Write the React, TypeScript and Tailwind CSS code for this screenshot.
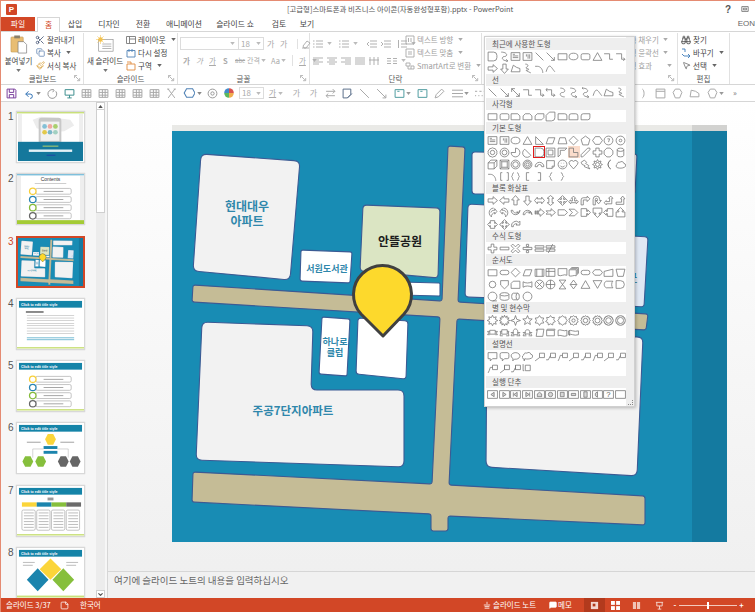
import React from 'react';
import { Scissors, Copy, Paintbrush, Binoculars, MousePointer2, MessageSquare, StickyNote, ChevronDown } from 'lucide-react';

type Pt = [number, number];

// rounded polygon for map blocks
const roundPoly = (pts: Pt[], r = 4) => {
  let d = '';
  pts.forEach((p, i) => {
    const a = pts[(i - 1 + pts.length) % pts.length];
    const b = pts[(i + 1) % pts.length];
    const la = Math.hypot(a[0] - p[0], a[1] - p[1]);
    const lb = Math.hypot(b[0] - p[0], b[1] - p[1]);
    const s: Pt = [p[0] + ((a[0] - p[0]) * r) / la, p[1] + ((a[1] - p[1]) * r) / la];
    const e: Pt = [p[0] + ((b[0] - p[0]) * r) / lb, p[1] + ((b[1] - p[1]) * r) / lb];
    d += `${i === 0 ? 'M' : 'L'}${s[0]} ${s[1]}Q${p[0]} ${p[1]} ${e[0]} ${e[1]}`;
  });
  return d + 'Z';
};

const Block = ({ pts, fill = '#f2f2f2', r = 4 }: { pts: Pt[]; fill?: string; r?: number }) => (
  <path d={roundPoly(pts, r)} fill={fill} stroke="#3b5b94" strokeWidth={1.1} />
);

const FONT = '"Noto Sans CJK KR", "Noto Sans", sans-serif';

const MapArt = ({ className }: { className?: string }) => (
  <svg viewBox="172 132 555 411" preserveAspectRatio="none" className={className} fontFamily={FONT}>
    <rect x="172" y="132" width="555" height="411" fill="#188cb4" />
    <rect x="692" y="132" width="35" height="411" fill="#147aa0" />
    {/* roads */}
    <path
      d={roundPoly([[193, 286], [442, 302], [448, 147], [465, 148], [458, 303], [648, 315], [646, 331], [457, 320], [449, 486], [645, 497], [645, 526], [448, 517], [448, 532], [431, 532], [431, 515], [192, 503], [193, 473], [432, 485], [440, 318], [192, 303]], 2.5)}
      fill="#c5bc96"
      stroke="#3b5b94"
      strokeWidth={1.1}
    />
    {/* blocks */}
    <Block pts={[[201, 155], [300, 162], [290, 281], [193, 272]]} r={6} />
    <Block pts={[[363, 206], [440, 209], [438, 279], [360, 272]]} fill="#dbe5c3" />
    <Block pts={[[301, 251], [352, 253], [350, 284], [300, 282]]} fill="#ffffff" r={2} />
    <Block pts={[[400, 283], [440, 284], [440, 297], [400, 296]]} fill="#ffffff" r={1} />
    <Block pts={[[322, 318], [350, 320], [347, 377], [319, 375]]} fill="#ffffff" r={2} />
    <Block pts={[[358, 319], [408, 322], [406, 380], [356, 375]]} fill="#ffffff" r={3} />
    <Block pts={[[202, 323], [313, 327], [311, 391], [404, 391], [404, 468], [196, 461]]} r={6} />
    <Block pts={[[472, 153], [637, 155], [635, 195], [472, 195]]} r={3} />
    <Block pts={[[468, 205], [560, 210], [558, 301], [465, 298]]} r={4} />
    <Block pts={[[600, 235], [648, 238], [644, 308], [596, 305]]} fill="#dfe7f3" r={3} />
    <Block pts={[[487, 335], [643, 338], [637, 477], [486, 468]]} r={6} />
    {/* labels */}
    <g fill="#2f87ab" fontWeight={700} textAnchor="middle">
      <text x="247" y="212" fontSize="12">현대대우</text>
      <text x="247" y="227" fontSize="12">아파트</text>
      <text x="327" y="272.5" fontSize="9">서원도서관</text>
      <text x="335" y="345.5" fontSize="9">하나로</text>
      <text x="335" y="357" fontSize="9">클럽</text>
      <text x="293" y="416" fontSize="11.5">주공7단지아파트</text>
      <text x="633" y="282" fontSize="9" textDecoration="underline">구</text>
    </g>
    <text x="400" y="247" textAnchor="middle" fontSize="12" fontWeight={700} fill="#1c1c1c">안뜰공원</text>
    {/* pin */}
    <path
      d="M383 337L361 315A29 29 0 1 1 404 315Z"
      fill="#fdd92c"
      stroke="#404040"
      strokeWidth={3}
      strokeLinejoin="round"
    />
  </svg>
);

const star = (n: number, ro: number, ri: number) => {
  let d = '';
  for (let i = 0; i < n * 2; i++) {
    const r = i % 2 ? ri : ro;
    const a = (Math.PI * i) / n - Math.PI / 2;
    d += `${i ? 'L' : 'M'}${(5 + r * Math.cos(a)).toFixed(2)} ${(5 + r * Math.sin(a)).toFixed(2)}`;
  }
  return d + 'Z';
};

const circle = (r: number) => `M${5 - r} 5a${r} ${r} 0 1 0 ${2 * r} 0a${r} ${r} 0 1 0 ${-2 * r} 0z`;

const S: Record<string, string> = {
  rect: 'M1 2.5h8v5.5H1z',
  round: 'M2.5 2.5h5a1.5 1.5 0 0 1 1.5 1.5v2.5a1.5 1.5 0 0 1-1.5 1.5h-5A1.5 1.5 0 0 1 1 6.5V4a1.5 1.5 0 0 1 1.5-1.5z',
  snip1: 'M1 2.5h6l2 2v3.5H1z',
  snip2: 'M3 2.5h4l2 2v3.5H1v-3.5z',
  snipd: 'M3 2.5h6v3.5l-2 2H1v-3.5z',
  rnd1: 'M1 2.5h6a2 2 0 0 1 2 2v3.5H1z',
  rnd2: 'M3 2.5h4a2 2 0 0 1 2 2v3.5H1v-3.5a2 2 0 0 1 2-2z',
  rndd: 'M3 2.5h6v3.5a2 2 0 0 1-2 2H1v-3.5a2 2 0 0 1 2-2z',
  flowsnip: 'M1 1h5a3 3 0 0 1 3 3v2a3 3 0 0 1-3 3H1z',
  snipround: 'M4 1h5v5a3 3 0 0 1-3 3H1V4z',
  oval: 'M1 5a4 3 0 1 0 8 0a4 3 0 1 0-8 0z',
  circle: circle(4),
  tri: 'M5 1.5l4 7H1z',
  rtri: 'M1.5 1.5l7 7h-7z',
  para: 'M3 2.5h6l-2 5.5H1z',
  trap: 'M2.5 2.5h5l1.5 5.5H1z',
  dia: 'M5 1l4 4-4 4-4-4z',
  pent: 'M5 1l4 3-1.5 5h-5L1 4z',
  hex: 'M3 1.5h4l2.5 3.5L7 8.5H3L.5 5z',
  oct: 'M3.5 1h3L9 3.5v3L6.5 9h-3L1 6.5v-3z',
  num7: circle(4) + 'M4 3.5h2l-1 3',
  num8: circle(4) + circle(1.2),
  dec: star(10, 4.3, 3.9) + circle(2),
  donut2: circle(4) + circle(2.2),
  pie: 'M5 5V1a4 4 0 1 1-4 4z',
  chord: 'M2.5 2a4 4 0 1 0 5.5 5.5z',
  frame: 'M1 1h8v8H1zM2.8 2.8v4.4h4.4V2.8z',
  half: 'M1 1h8l-2 2H3v4l-2 2z',
  ell: 'M1 1h4v4h4v4H1z',
  stripe: 'M1 7L7 1h2v1.5L2.5 9H1z',
  cross: 'M3.5 1h3v2.5H9v3H6.5V9h-3V6.5H1v-3h2.5z',
  can: 'M2 2.5a3 1.5 0 0 1 6 0v5a3 1.5 0 0 1-6 0zM2 2.5a3 1.5 0 0 0 6 0',
  cube: 'M1 3.5L3.5 1H9v5.5L6.5 9H1zM1 3.5h5.5V9M6.5 3.5L9 1',
  bevel: 'M1 1h8v8H1zM2.5 2.5h5v5h-5zM1 1l1.5 1.5M9 1L7.5 2.5M1 9l1.5-1.5M9 9L7.5 7.5',
  donut: circle(4) + circle(2.5),
  nosmoke: circle(4) + circle(2.8) + circle(1.4),
  barc: 'M1 7a4 4 0 0 1 8 0H7a2 2 0 0 0-4 0z',
  fold: 'M1.5 1.5h7v5l-2 2h-5zM6.5 8.5v-2h2',
  smile: circle(4) + 'M3 6a2.2 2.2 0 0 0 4 0M3.5 3.8h.5M6 3.8h.5',
  heart: 'M5 9L1.5 5a2.2 2.2 0 0 1 3.5-2.8A2.2 2.2 0 0 1 8.5 5z',
  bolt: 'M1 3l3-2 2 2-1 1 3 2-.5 1L9 9 4 7l.5-1L2 5z',
  sun: star(8, 4.5, 2.8) + circle(1.8),
  moon: 'M7 1a4.5 4.5 0 0 0 0 8A4.5 4.5 0 0 1 7 1z',
  cloud: 'M2.5 8a1.7 1.7 0 0 1-.5-3.2A1.8 1.8 0 0 1 4.5 3 2 2 0 0 1 8 4a1.8 1.8 0 0 1 .5 3.5C7 8.5 4 8.5 2.5 8z',
  brk2: 'M3 1.5H1.5v7H3M7 1.5h1.5v7H7',
  brc2: 'M3.5 1.5c-1.5 0-1 3-2 3.5 1 .5.5 3.5 2 3.5M6.5 1.5c1.5 0 1 3 2 3.5-1 .5-.5 3.5-2 3.5',
  brkl: 'M6.5 1.5H4v7h2.5',
  brkr: 'M3.5 1.5H6v7H3.5',
  brcl: 'M6.5 1.5c-2 0-1 3-2.5 3.5 1.5.5.5 3.5 2.5 3.5',
  brcr: 'M3.5 1.5c2 0 1 3 2.5 3.5-1.5.5-.5 3.5-2.5 3.5',
  line: 'M1.5 1.5l7 7',
  aline: 'M1.5 1.5l7 7M8.5 5.5v3h-3',
  dline: 'M1.5 1.5l7 7M8.5 5.5v3h-3M1.5 4.5v-3h3',
  elbow: 'M1 2.5h5v5h3',
  elbowa: 'M1 2.5h5v5h3M7.5 6l1.5 1.5L7.5 9',
  elbowd: 'M2 1l-1 1.5L2 4M1 2.5h5v5h3M7.5 6l1.5 1.5L7.5 9',
  curve: 'M3 1c5 0 5 4 2 4s-3 4 2 4',
  curvea: 'M2 1c6 0 6 4 3 4s-3 4 3 4M6.5 7.5L8 9 6.5 10',
  curved: 'M3 0l-1 1 1 1M2 1c6 0 6 4 3 4s-3 4 3 4M6.5 7.5L8 9 6.5 10',
  hump: 'M1 8c3-10 5-3 8 0',
  arch: 'M1 3h2c3 0 5 3 5 6',
  free: 'M1 8l2-6 3 2 3 1v3z',
  scrib: 'M3 1c3 0 3 2 1 3s3 1 2 2-3 0-2 1 3 1 4 2',
  text: 'M1 1.5h8v7H1zM2.5 3h2M2.5 4.5h5M2.5 6h5',
  textv: 'M1 1.5h8v7H1zM7 3v4M5.5 3v4M4 3v2',
  ra: 'M1 3.5h4.5V1.5L9.5 5l-4 3.5v-2H1z',
  la: 'M9 3.5H4.5V1.5L.5 5l4 3.5v-2H9z',
  ua: 'M3.5 9V4.5H1.5L5 .5l3.5 4h-2V9z',
  da: 'M3.5 1v4.5H1.5L5 9.5l3.5-4h-2V1z',
  lra: 'M.5 5l2.5-3v1.5h4V2l2.5 3L7 8V6.5H3V8z',
  uda: 'M5 .5L8 3H6.5v4H8L5 9.5 2 7h1.5V3H2z',
  quad: 'M5 .5L7 2.5H6V4h1.5V3L9.5 5l-2 2V6H6v1.5h1l-2 2-2-2h1V6H2.5v1l-2-2 2-2v1H4V2.5H3z',
  lru: 'M5 1l2 2H6v2.5h1.5v-1L9.5 6l-2 2V7h-5v1L.5 6l2-1.5v1H4V3H3z',
  bent: 'M1 9V4.5A2 2 0 0 1 3 2.5h3.5V1L9 3.5 6.5 6V4.5H3V9z',
  uturn: 'M1 9V4a3 3 0 0 1 6 0v1h1.5L6 8 3.5 5H5V4a1 1 0 0 0-2 0v5z',
  lua: 'M1 7l2-2v1h3V3H5l2-2 2 2H8v5H3v1z',
  bup: 'M1 6.5h5V3.5H5L7 1l2 2.5H8v5H1z',
  curr: 'M6 1a4 4 0 0 0-4 4c0 2 1 3 2 4 0-2 1-3.5 3-4V6.5L9 4 7 1.5V3C5 3 4 3.5 3.5 5',
  curl: 'M4 1a4 4 0 0 1 4 4c0 2-1 3-2 4 0-2-1-3.5-3-4V6.5L1 4l2-2.5V3c2 0 3 .5 3.5 2',
  curu: 'M1 3a4 4 0 0 0 8 0L7.5 6 6 4.5H7.5C7 6 3 6 2.5 3z',
  curd: 'M1 7a4 4 0 0 1 8 0L7.5 4 6 5.5H7.5C7 4 3 4 2.5 7z',
  strip: 'M1 3.5h.5v3H1zM2.5 3.5h.8v3h-.8zM4 3.5h1.5V1.5L9.5 5l-4 3.5v-2H4z',
  notch: 'M1 3.5h4.5V1.5L9.5 5l-4 3.5v-2H1L2.5 5z',
  home: 'M1 2.5h6L9.5 5 7 7.5H1z',
  chev: 'M1 2h5l3 3-3 3H1l3-3z',
  rcall: 'M1 1.5h5v2.5h1V2.5L9.5 5 7 7.5V6H6v2.5H1z',
  dcall: 'M1 1h8v4.5H6.5v1H8L5 9.5 2 6.5h1.5v-1H1z',
  lcall: 'M9 1.5H4v2.5H3V2.5L.5 5 3 7.5V6h1v2.5h5z',
  ucall: 'M1 9h8V4.5H6.5v-1H8L5 .5 2 3.5h1.5v1H1z',
  lrcall: 'M3 1.5h4v2.5h.5V3L9.5 5l-2 2V6H7v2.5H3V6h-.5v1l-2-2 2-2v1H3z',
  qcall: 'M5 .5L7 2.5H6v1h.5v.5H7V3l2.5 2L7 7V6h-.5v.5H6v1h1l-2 2-2-2h1v-1h-.5V6H3v1L.5 5 3 3v1h.5v-.5H4v-1H3z',
  circa: 'M1.5 7A4 4 0 0 1 8 3l1-1v3.5H5.5l1-1A2.5 2.5 0 0 0 3 7z',
  plus: 'M3.8 1h2.4v2.8H9v2.4H6.2V9H3.8V6.2H1V3.8h2.8z',
  minus: 'M1 3.8h8v2.4H1z',
  times: 'M2.5 1L5 3.5 7.5 1 9 2.5 6.5 5 9 7.5 7.5 9 5 6.5 2.5 9 1 7.5 3.5 5 1 2.5z',
  div: 'M1 4h8v2H1zM4 1.2h2v2H4zM4 6.8h2v2H4z',
  equal: 'M1 2.5h8v2H1zM1 5.5h8v2H1z',
  neq: 'M1 2.5h8v2H1zM1 5.5h8v2H1zM3 9l4-8',
  pred: 'M1 2h8v6.5H1zM2.5 2v6.5M7.5 2v6.5',
  inter: 'M1 1.5h8v7H1zM1 4h8M3.5 1.5v7',
  doc: 'M1 1.5h8v6c-3-1.5-5 1.5-8 0z',
  mdoc: 'M3 .5h6.5v5.5M2 1.5h6.5v5.5M1 2.5h6.5v5.5c-2-1-4.5 1-6.5 0z',
  term: 'M3 3h4a2 2 0 0 1 0 4H3a2 2 0 0 1 0-4z',
  prep: 'M2.5 2.5h5L9.5 5l-2 2.5h-5L.5 5z',
  minp: 'M1 4l8-2v6.5H1z',
  mop: 'M1 2h8L7.5 8.5h-5z',
  conn: circle(3),
  off: 'M1.5 1.5h7v4L5 9 1.5 5.5z',
  card: 'M3 2h6v6.5H1V4z',
  tape: 'M1 2.5c2 1.5 6 1.5 8 0v5c-2-1.5-6-1.5-8 0z',
  sum: circle(4) + 'M2.2 2.2l5.6 5.6M7.8 2.2L2.2 7.8',
  or: circle(4) + 'M5 1v8M1 5h8',
  coll: 'M2 1h6L2 9h6z',
  sort: 'M5 1l3 4-3 4-3-4zM2 5h6',
  ext: 'M5 1.5l4 7H1z',
  merge: 'M1 1.5h8l-4 7z',
  stored: 'M3 2h6c-1.5 1-1.5 5 0 6H3c-2.5-1-2.5-5 0-6z',
  delay: 'M1 1.5h4a3.5 3.5 0 0 1 0 7H1z',
  seq: circle(4) + 'M5 9h4',
  disk: 'M1 3a4 1.5 0 0 1 8 0v4a4 1.5 0 0 1-8 0zM1 3a4 1.5 0 0 0 8 0',
  drum: 'M3 2h4a1.5 3 0 0 1 0 6H3a1.5 3 0 0 1 0-6zM7 2a1.5 3 0 0 0 0 6',
  b8: star(8, 4.8, 2.8),
  b12: star(12, 4.8, 3),
  s4: star(4, 4.5, 1.6),
  s5: star(5, 4.5, 2),
  s6: star(6, 4.5, 2.8),
  s7: star(7, 4.5, 3),
  s8: star(8, 4.5, 3.3),
  s10: star(10, 4.5, 3.5) + circle(1.5),
  s12: star(12, 4.5, 3.5) + circle(2),
  s16: star(16, 4.5, 3.7) + circle(2.2),
  s24: star(24, 4.5, 3.8) + circle(2.5),
  s32: star(32, 4.5, 4) + circle(2.8),
  rib1: 'M2.5 3h5v3.5h-5zM2.5 4H.5l1 1.5-1 1.5h2M7.5 4h2l-1 1.5 1 1.5h-2',
  rib2: 'M2.5 2.5h5v4h-5zM2.5 4H1l.5 1.5L1 8h2.5M7.5 4H9l-.5 1.5L9 8H6.5',
  rib3: 'M3 4c0-3 4-3 4 0v3H3zM3 5H1l1 1-1 2h3M7 5h2L8 6l1 2H6',
  rib4: 'M3 4c0-2 4-2 4 0v3c0-1-4-1-4 0zM3 5H1l1 1-1 2h3M7 5h2L8 6l1 2H6',
  scroll: 'M3 2h6l-1 6.5H2zM3 2a1 1 0 0 0-1 1h1',
  hscroll: 'M1.5 3h7v5h-7zM1.5 3a1 1 0 0 1 1-1h6.5v1',
  wave: 'M1 3c2-1.5 5 1.5 8 0v5c-3 1.5-6-1.5-8 0z',
  dwave: 'M.5 3.5c2-1.5 5 1.5 9 0v3.5c-4 1.5-7-1.5-9 0zM1.5 3v5',
  call1: 'M1 1.5h8v5.5H5L3 9V7H1z',
  call2: 'M2.5 1.5h5A1.5 1.5 0 0 1 9 3v2.5A1.5 1.5 0 0 1 7.5 7H5L3 9V7h-.5A1.5 1.5 0 0 1 1 5.5V3a1.5 1.5 0 0 1 1.5-1.5z',
  call3: 'M1 4.5a4 3 0 1 1 3 2.9L2.5 9l.3-2.1A3 3 0 0 1 1 4.5z',
  call4: 'M2 7.5a2 2 0 0 1-.5-3.8A2 2 0 0 1 4.5 2 2 2 0 0 1 8 3a1.8 1.8 0 0 1 .5 3.5C7 7.5 4 7.5 2.5 7L2 9z',
  lc1: 'M5 2h4.5v4H5zM5 6L1 9',
  lc2: 'M5 2h4.5v4H5zM5 4L3 8H1',
  lc3: 'M5 2h4.5v4H5zM5 4H3L2 7l-1 2',
  lc4: 'M3 2h4.5v5H3zM1 1v6h1',
  lc5: 'M5 2h4.5v4H5zM5 2v4M5 6L1 9',
  lc6: 'M5 2h4.5v4H5zM5 2v4M5 4L3 8H1',
  act: 'M.5 1.5h9v7h-9z',
};

// action buttons have a small glyph inside
const ACT: Record<string, string> = {
  a1: 'M6.5 3L3.5 5l3 2z',
  a2: 'M3.5 3l3 2-3 2z',
  a3: 'M3 3v4M6.5 3L3.5 5l3 2z',
  a4: 'M7 3v4M3.5 3l3 2-3 2z',
  a5: 'M3 7V4.5L5 3l2 1.5V7z',
  a6: circle(2),
  a7: 'M3 3h3.5v4H3z',
  a8: 'M3 4h4v2H3z',
  a9: 'M3.5 2.5h3v5h-3z',
  a10: 'M3 4l2-1.5v5L3 6z',
  a12: '',
};

const Shape = ({ k }: { k: string }) => {
  const isAct = k in ACT || k === 'a11';
  return (
    <svg viewBox="0 0 10 10" className="w-[11px] h-[11px]" fill="none" stroke="#757575" strokeWidth={0.7}>
      <path d={isAct ? S.act : S[k]} />
      {k in ACT && <path d={ACT[k]} fill={k === 'a12' ? 'none' : '#d8d8d8'} />}
      {k === 'a11' && (
        <text x="5" y="7.6" textAnchor="middle" fontSize="7" fill="#555" stroke="none" fontFamily="Liberation Sans">?</text>
      )}
    </svg>
  );
};

const SECTIONS: { title: string; extra?: string; items: string[] }[] = [
  {
    title: '최근에 사용한 도형',
    items: ['flowsnip', 'curvea', 'text', 'textv', 'line', 'aline', 'rect', 'oval', 'round', 'tri', 'elbow', 'elbowa', 'ra', 'da', 'free', 'scrib', 'arch', 'hump'],
  },
  {
    title: '선',
    items: ['line', 'aline', 'dline', 'elbow', 'elbowa', 'elbowd', 'curve', 'curvea', 'curved', 'hump', 'free', 'scrib'],
  },
  { title: '사각형', items: ['rect', 'round', 'snip1', 'snip2', 'snipd', 'snipround', 'rnd1', 'rnd2', 'rndd'] },
  {
    title: '기본 도형',
    items: [
      'text', 'textv', 'oval', 'tri', 'rtri', 'para', 'trap', 'dia', 'pent', 'hex', 'num7', 'num8',
      'dec', 'donut2', 'pie', 'chord', 'flowsnip', 'frame', 'half', 'ell', 'stripe', 'cross', 'oct', 'can',
      'cube', 'bevel', 'donut', 'nosmoke', 'barc', 'fold', 'smile', 'heart', 'bolt', 'sun', 'moon', 'cloud',
      'arch', 'brk2', 'brc2', 'brkl', 'brkr', 'brcl', 'brcr',
    ],
  },
  {
    title: '블록 화살표',
    items: [
      'ra', 'la', 'ua', 'da', 'lra', 'uda', 'quad', 'lru', 'bent', 'uturn', 'lua', 'bup',
      'curr', 'curl', 'curu', 'curd', 'strip', 'notch', 'home', 'chev', 'rcall', 'dcall', 'lcall', 'ucall',
      'lrcall', 'qcall', 'circa',
    ],
  },
  { title: '수식 도형', items: ['plus', 'minus', 'times', 'div', 'equal', 'neq'] },
  {
    title: '순서도',
    items: [
      'rect', 'term', 'dia', 'para', 'pred', 'inter', 'doc', 'mdoc', 'term', 'prep', 'minp', 'mop',
      'conn', 'off', 'card', 'tape', 'sum', 'or', 'coll', 'sort', 'ext', 'merge', 'stored', 'delay',
      'seq', 'disk', 'drum', 'circle',
    ],
  },
  {
    title: '별 및 현수막',
    items: [
      'b8', 'b12', 's4', 's5', 's6', 's7', 's8', 's10', 's12', 's16', 's24', 's32',
      'rib1', 'rib2', 'rib3', 'rib4', 'scroll', 'hscroll', 'wave', 'dwave',
    ],
  },
  {
    title: '설명선',
    extra: 'mb-[2px]',
    items: ['call1', 'call2', 'call3', 'call4', 'lc1', 'lc2', 'lc3', 'lc1', 'lc2', 'lc3', 'lc1', 'lc2', 'lc3', 'lc5', 'lc6', 'lc4'],
  },
  { title: '실행 단추', items: ['a1', 'a2', 'a3', 'a4', 'a5', 'a6', 'a7', 'a8', 'a9', 'a10', 'a11', 'a12'] },
];

const ShapesMenu = () => (
  <div className="absolute left-[483px] top-[35px] w-[151px] h-[371px] flex bg-white border border-[#d0d0d0] shadow-[1px_1px_3px_rgba(0,0,0,0.25)] z-20">
    <div className="w-[141px] pt-[1px] pl-[1px]">
      {SECTIONS.map((sec, si) => (
        <div key={sec.title} className={sec.extra}>
          <div className="h-[12px] bg-[#eeeeee] pl-[6px] flex items-center text-[7.5px] text-[#555] leading-none">
            {sec.title}
          </div>
          <div className="grid grid-cols-[repeat(12,11.6px)] pl-[1px] auto-rows-[12px]">
            {sec.items.map((k, i) => (
              <div
                key={i}
                className={
                  si === 3 && i === 16
                    ? 'flex items-center justify-center outline outline-[1.5px] outline-[#e11b1b] -outline-offset-1'
                    : si === 3 && i === 19
                      ? 'flex items-center justify-center bg-[#fbdccb]'
                      : 'flex items-center justify-center'
                }
              >
                <Shape k={k} />
              </div>
            ))}
          </div>
        </div>
      ))}
    </div>
    <div className="flex-1 bg-[#eeeeee] relative">
      <div className="absolute right-[1px] bottom-[1px] w-[5px] h-[5px] border-r border-b border-dotted border-[#888]" />
    </div>
  </div>
);

const Caret = ({ c = '#777' }: { c?: string }) => (
  <svg viewBox="0 0 6 4" className="w-[5px] h-[3px] shrink-0"><path d="M0 0h6L3 4z" fill={c} /></svg>
);

const Launcher = () => (
  <svg viewBox="0 0 8 8" className="w-[7px] h-[7px]" fill="none" stroke="#9a9a9a" strokeWidth={0.8}>
    <path d="M.5 3.5v-3h3M1.5 1.5l4 4M6.5 3.5v3h-3" />
  </svg>
);

const Group = ({ label, w, children, launcher = true }: { label: string; w: string; children: React.ReactNode; launcher?: boolean }) => (
  <div className={`${w} shrink-0 h-full flex flex-col border-r border-[#e1e1e1]`}>
    <div className="flex-1 flex min-h-0">{children}</div>
    <div className="h-[11px] relative flex items-center justify-center text-[7.5px] text-[#555] leading-none">
      {label}
      {launcher && <div className="absolute right-[2px] top-[2px]"><Launcher /></div>}
    </div>
  </div>
);

const SmallBtn = ({ icon, label, caret, dim }: { icon: React.ReactNode; label: string; caret?: boolean; dim?: boolean }) => (
  <div className={`h-[13px] flex items-center gap-[2px] whitespace-nowrap text-[7.5px] leading-none ${dim ? 'text-[#a0a0a0]' : 'text-[#444]'}`}>
    <span className="w-[10px] flex justify-center">{icon}</span>
    {label}
    {caret && <span className="ml-[3px]"><Caret c={dim ? '#aaa' : '#666'} /></span>}
  </div>
);

const G = ({ d, c = '#a8a8a8', s = 10 }: { d: string; c?: string; s?: number }) => (
  <svg viewBox="0 0 10 10" style={{ width: s, height: s }} className="shrink-0" fill="none" stroke={c} strokeWidth={0.9}>
    <path d={d} />
  </svg>
);

const Ribbon = () => (
  <div className="h-[53px] flex bg-white border-b border-[#d6d6d6] pt-[1px] pl-[1px]">
    <Group label="클립보드" w="w-[82px]">
      <div className="w-[33px] flex flex-col items-center pt-[2px]">
        <svg viewBox="0 0 18 20" className="w-[18px] h-[19px]">
          <rect x="0.5" y="2" width="13" height="16" rx="1" fill="#e8bd73" stroke="#b98f4a" strokeWidth={0.5} />
          <rect x="4" y="0.5" width="6" height="3" fill="#8a7f6a" />
          <path d="M8 7h6l3 3v9H8z" fill="#fff" stroke="#777" strokeWidth={0.7} />
        </svg>
        <div className="text-[7.5px] text-[#444] leading-none mt-[3px] whitespace-nowrap">붙여넣기</div>
        <div className="mt-[4px]"><Caret /></div>
      </div>
      <div className="flex flex-col">
        <SmallBtn icon={<Scissors size={10} className="text-[#4a5a7a]" />} label="잘라내기" />
        <SmallBtn icon={<Copy size={9} className="text-[#5b7fae]" />} label="복사" caret />
        <SmallBtn icon={<Paintbrush size={9} className="text-[#d9a441]" />} label="서식 복사" />
      </div>
    </Group>
    <Group label="슬라이드" w="w-[94px]">
      <div className="w-[42px] flex flex-col items-center pt-[2px]">
        <svg viewBox="0 0 20 20" className="w-[18px] h-[18px]">
          <rect x="3" y="5" width="16" height="13" fill="#fff" stroke="#8a8a8a" strokeWidth={0.7} />
          <path d="M7 10h10M7 12.5h10M7 15h10" stroke="#9a9a9a" strokeWidth={0.8} />
          <circle cx="5" cy="5" r="2.5" fill="#f3c24f" />
          <path d="M5 0v10M0 5h10M1.5 1.5l7 7M8.500 1.5l-7 7" stroke="#f3c24f" strokeWidth={0.6} />
        </svg>
        <div className="text-[7.5px] text-[#444] leading-none mt-[4px] whitespace-nowrap">새 슬라이드</div>
        <div className="mt-[4px]"><Caret /></div>
      </div>
      <div className="flex flex-col">
        <SmallBtn icon={<G d="M.5 1.5h9v7h-9zM3.5 1.5v7M3.5 4h6" c="#7a7a7a" />} label="레이아웃" caret />
        <SmallBtn icon={<G d="M1 2.5h8v6.5H1zM3 1v3M6 1v3" c="#4f81b5" />} label="다시 설정" />
        <SmallBtn icon={<G d="M1 3h8v6H1zM1 1h4v2" c="#e08a3c" />} label="구역" caret />
      </div>
    </Group>
    <Group label="글꼴" w="w-[132px]">
      <div className="flex flex-col pt-[4px] pl-[2px] gap-[3px]">
        <div className="flex items-center">
          <div className="w-[59px] h-[13px] border border-[#dcdcdc] flex items-center justify-end pr-[3px]"><Caret c="#bbb" /></div>
          <div className="w-[25px] h-[13px] border border-l-0 border-[#dcdcdc] flex items-center justify-between px-[2px] text-[8px] text-[#aaa]">
            18<Caret c="#bbb" />
          </div>
          <span className="ml-[3px] w-[13px] text-[8px] text-[#aaa]">가</span>
          <span className="w-[13px] text-[8px] text-[#aaa]">가</span>
          <div className="ml-[4px] border-l border-[#e1e1e1] pl-[3px]"><G d="M2 7l4-5 3 2-4 5H3zM1 9h7" /></div>
        </div>
        <div className="flex items-center text-[7.5px] text-[#aaa] h-[15px] pl-[3px]">
          <span className="w-[13px] font-bold">가</span>
          <span className="w-[13px] italic">가</span>
          <span className="w-[14px] underline">가</span>
          <span className="w-[12px] font-bold">S</span>
          <span className="w-[12px] line-through text-[6px]">abc</span>
          <span className="w-[22px] text-[7px] flex items-center gap-[1px] whitespace-nowrap">간격<Caret c="#bbb" /></span>
          <span className="w-[20px] ml-[2px] flex items-center gap-[1px]">Aa<Caret c="#bbb" /></span>
          <span className="border-l border-[#e1e1e1] pl-[6px] w-[20px] ml-[1px] underline">가</span>
          <Caret c="#bbb" />
        </div>
      </div>
    </Group>
    <Group label="단락" w="w-[172px]">
      <div className="flex flex-col pt-[4px] pl-[3px] gap-[3px] w-[95px] shrink-0">
        <div className="flex items-center gap-[4px] h-[13px]">
          <G d="M0 2h1.5M3 2h7M0 5h1.5M3 5h7M0 8h1.5M3 8h7" />
          <Caret c="#bbb" />
          <span className="ml-[3px]"><G d="M0 2h1.5M3 2h7M0 5h1.5M3 5h7M0 8h1.5M3 8h7" /></span>
          <Caret c="#bbb" />
          <span className="ml-[5px]"><G d="M3 2h7M3 5h7M3 8h7M2 3L0 5l2 2" /></span>
          <G d="M3 2h7M3 5h7M3 8h7M0 3l2 2-2 2" />
          <span className="ml-[2px]"><G d="M4 2h6M4 5h6M4 8h6M1.5 1v8" /></span>
          <Caret c="#bbb" />
        </div>
        <div className="flex items-center gap-[4px] h-[15px]">
          <G d="M0 2h10M0 4h6M0 6h10M0 8h6" />
          <G d="M0 2h10M2 4h6M0 6h10M2 8h6" />
          <G d="M0 2h10M4 4h6M0 6h10M4 8h6" />
          <G d="M0 2h10M0 4h10M0 6h10M0 8h10" />
          <G d="M1 1v8M5 1v8M9 1v8M0 4h10" />
          <span className="ml-[4px]"><G d="M0 2.5h4M6 2.5h4M0 5h4M6 5h4M0 7.5h4M6 7.5h4" /></span>
          <Caret c="#bbb" />
        </div>
      </div>
      <div className="flex flex-col">
        <SmallBtn dim icon={<G d="M1 1h8v8H1zM3.5 3v4M6 3v4" />} label="텍스트 방향" caret />
        <SmallBtn dim icon={<G d="M1 1h8v8H1zM3 4h4M3 6h4" />} label="텍스트 맞춤" caret />
        <SmallBtn dim icon={<G d="M1 2h4v3H1zM6 5h3v3H6zM3 5v3h3" />} label="SmartArt로 변환" caret />
      </div>
    </Group>
    <Group label="그리기" w="w-[196px]">
      <div className="flex-1 flex justify-end pr-[5px]">
        <div className="flex flex-col text-[7.5px] text-[#a0a0a0] leading-none">
          <div className="h-[13px] flex items-center gap-[4px] whitespace-nowrap">도형 채우기<Caret c="#aaa" /></div>
          <div className="h-[13px] flex items-center gap-[4px] whitespace-nowrap">도형 윤곽선<Caret c="#aaa" /></div>
          <div className="h-[13px] flex items-center gap-[4px] whitespace-nowrap">도형 효과<span className="w-[7px]" /><Caret c="#aaa" /></div>
        </div>
      </div>
    </Group>
    <Group label="편집" w="w-[52px]" launcher={false}>
      <div className="flex flex-col pl-[3px]">
        <SmallBtn icon={<Binoculars size={10} className="text-[#444]" />} label="찾기" />
        <SmallBtn icon={<G d="M1 1h3v3M1 6l2 2h6M7 6l2 2-2 2" c="#3a79b8" />} label="바꾸기" caret />
        <SmallBtn icon={<MousePointer2 size={9} className="text-[#666]" />} label="선택" caret />
      </div>
    </Group>
  </div>
);

const QItem = ({ d, c = '#a8a8a8', caret, w = 'w-[17px]' }: { d: string; c?: string; caret?: boolean; w?: string }) => (
  <div className={`${w} shrink-0 flex items-center justify-center gap-[1px]`}>
    <G d={d} c={c} s={11} />
    {caret && <Caret c="#999" />}
  </div>
);

const TABLE = 'M1 1.5h8v7H1zM1 4h8M1 6.5h8M4 1.5v7M6.5 1.5v7';

const Qat = () => (
  <div className="h-[17px] flex items-center bg-white border-b border-[#d6d6d6] pl-[2px]">
    <QItem d="M1 1h7l1 1v7H1zM3 1v3h4V1M3 9V6h4v3" c="#7a3f9d" />
    <div className="w-[24px] shrink-0 flex items-center justify-center gap-[2px]">
      <G s={11} c="#2e6fb3" d="M2.5 5.5h4a2 2 0 0 1 0 4M2.5 5.5l2.5-2.5M2.5 5.5L5 8" />
      <Caret c="#888" />
    </div>
    <QItem d="M8 3a4 4 0 1 1-2.5-1.5M5.5 1l1 1.5-1.5 1" c="#999" />
    <QItem d="M1 1.5h8v5H1zM5 6.5V9M3 9h4" c="#3e8f8f" />
    <QItem d={TABLE} />
    <QItem d={TABLE} />
    <QItem d={TABLE} />
    <QItem d={TABLE} />
    <QItem d={TABLE} />
    <QItem d="M2 1l6 8M8 1L2 9M1 1h2M7 1h2" />
    <div className="w-[24px] shrink-0 flex items-center justify-center gap-[2px]">
      <G s={12} c="#4f81b5" d="M3 1.5h5l2 3.5-2 3.5H3L1 5z" />
      <Caret c="#888" />
    </div>
    <QItem d={circle(4) + circle(1.5)} c="#999" />
    <svg viewBox="0 0 10 10" className="w-[12px] h-[12px] mx-[2px] shrink-0">
      <path d="M5 5V1a4 4 0 0 1 4 4z" fill="#d9534f" />
      <path d="M5 5h4a4 4 0 0 1-4 4z" fill="#f0ad4e" />
      <path d="M5 5v4a4 4 0 0 1-4-4z" fill="#5cb85c" />
      <path d="M5 5H1a4 4 0 0 1 4-4z" fill="#428bca" />
    </svg>
    <div className="ml-[2px] w-[25px] h-[12px] shrink-0 border border-[#dcdcdc] flex items-center justify-between px-[2px] text-[8px] text-[#aaa]">
      18<Caret c="#bbb" />
    </div>
    <div className="w-[24px] shrink-0 flex items-center justify-center gap-[2px] text-[8px] text-[#aaa] underline">가<Caret c="#bbb" /></div>
    <div className="w-[17px] shrink-0 text-center text-[8px] text-[#aaa]">가</div>
    <div className="w-[17px] shrink-0 text-center text-[8px] text-[#aaa]">가</div>
    <QItem d="M1 3h8M7 1l2 2-2 2M9 7H1M3 5L1 7l2 2" />
    <QItem d="M1 1h7v5L5 9H1zM9 5L5 9" c="#5a6e8a" />
    <QItem d="M1 1l8 8" />
    <QItem d="M1 1l8 8M9 6v3H6" />
    <QItem d="M1 1.5h8v7H1zM3 3h2" c="#4f9ca0" caret w="w-[24px]" />
    <QItem d="M1 1.5h8v7H1zM3 3h2" c="#4f9ca0" />
    <QItem d="M1 9l1-3 5-5 2 2-5 5z" />
    <QItem d="M0 2h10M0 5h10M0 8h10" caret w="w-[24px]" />
    <QItem d="M0 3h2M4 3h2M8 3h2M0 7h1M3 7h1M6 7h1M9 7h1" caret w="w-[22px]" />
    <div className="w-[141px] shrink-0" />
    <QItem d="M4 1c2 1 2 7 0 8" />
    <QItem d="M1 1h8v8H1zM1 3h8" />
    <QItem d="M1 4l2-3h4l2 3-2 5H3z" />
    <QItem d="M1 8l1-6 4 1 3 2v3z" />
    <QItem d="M1 4l2-3h4l2 3-2 5H3z" caret w="w-[24px]" />
    <div className="ml-[6px] text-[8px] text-[#777] leading-none">»</div>
  </div>
);

const TitleBar = ({ label }: { label: string }) => (
  <>
    <rect x="2" y="2" width="64" height="7" fill="#1584a8" />
    <text x="4" y="7" fontSize="3.6" fontWeight={700} fill="#fff" fontFamily="Liberation Sans">{label}</text>
  </>
);

const Pills = () => (
  <>
    {['#f7cf3a', '#2c86b4', '#86bb3b', '#666666'].map((c, i) => (
      <g key={c}>
        <rect x="19" y={15 + i * 8.5} width="36" height="6" rx="1.5" fill="#fff" stroke="#aaa" strokeWidth={0.7} />
        <circle cx="16" cy={18 + i * 8.5} r="3.3" fill="#fff" stroke={c} strokeWidth={1.3} />
        <rect x="27" y={17.6 + i * 8.5} width="20" height="0.9" fill="#999" />
      </g>
    ))}
  </>
);

const Thumb1 = () => (
  <svg viewBox="0 0 68 52" className="w-full h-full" preserveAspectRatio="none">
    <rect width="68" height="52" fill="#fff" />
    <rect width="68" height="1.5" fill="#c9e07a" />
    <rect x="1" y="2" width="4" height="30" fill="#eee" /><rect x="63" y="2" width="4" height="30" fill="#eee" />
    <path d="M16 8l8-3 14 1 16 2 4 6-10 6-14 1-14-4z" fill="#ececec" />
    <rect x="22" y="6" width="23" height="30" rx="3" fill="#c8c8c8" />
    <rect x="24" y="10" width="19" height="20" fill="#f1f1f1" />
    {['#85c0d6', '#f0a9a0', '#a9cf6e', '#e2c94a', '#7ab7c9', '#a2d0c2'].map((c, i) => (
      <circle key={i} cx={28 + (i % 3) * 5.5} cy={15 + Math.floor(i / 3) * 6} r="2.4" fill={c} />
    ))}
    <rect x="1" y="31" width="66" height="20" fill="#15789c" />
    <rect x="26" y="35" width="16" height="1" fill="#b8d46a" />
    <rect x="12" y="39" width="44" height="2.5" fill="#e3f1f6" />
    <rect x="30" y="44.5" width="9" height="0.8" fill="#2038a8" />
  </svg>
);

const Thumb2 = () => (
  <svg viewBox="0 0 68 52" className="w-full h-full" preserveAspectRatio="none">
    <rect width="68" height="52" fill="#fff" />
    <rect width="68" height="1.5" fill="#7fc0dc" />
    <rect x="0" y="2" width="4" height="46" fill="#eee" /><rect x="64" y="2" width="4" height="46" fill="#eee" />
    <text x="34" y="7.5" textAnchor="middle" fontSize="5" fill="#333" fontFamily="Liberation Sans">Contents</text>
    <rect x="18" y="9.5" width="32" height="0.6" fill="#aaa" />
    <Pills />
    <rect y="48" width="68" height="4" fill="#a4cb35" />
  </svg>
);

const textLines = (ys: number[], x = 10, w = 48) =>
  ys.map((y) => <rect key={y} x={x} y={y} width={w} height="0.6" fill="#b5b5b5" />);

const Thumb4 = () => (
  <svg viewBox="0 0 68 52" className="w-full h-full" preserveAspectRatio="none">
    <rect width="68" height="52" fill="#fff" />
    <TitleBar label="Click to edit title style" />
    <rect x="9" y="12.5" width="18" height="2" fill="#888" />
    {textLines([17, 19.5, 22, 25, 27.5, 30, 33, 35.5])}
    {[40, 42].map((y) => <rect key={y} x="10" y={y} width="48" height="0.8" fill="#4ea8c8" />)}
    <rect y="50" width="68" height="1.5" fill="#c9e07a" />
  </svg>
);

const Thumb5 = () => (
  <svg viewBox="0 0 68 52" className="w-full h-full" preserveAspectRatio="none">
    <rect width="68" height="52" fill="#fff" />
    <TitleBar label="Click to edit title style" />
    <g transform="translate(0 1)"><Pills /></g>
    <rect y="50" width="68" height="1.5" fill="#c9e07a" />
  </svg>
);

const hexa = (cx: number, cy: number, r: number) =>
  `M${cx - r / 2} ${cy - r}h${r}l${r / 2} ${r}l${-r / 2} ${r}h${-r}l${-r / 2} ${-r}z`;

const Thumb6 = () => (
  <svg viewBox="0 0 68 52" className="w-full h-full" preserveAspectRatio="none">
    <rect width="68" height="52" fill="#fff" />
    <TitleBar label="Click to edit title style" />
    <path d={hexa(34, 17, 5.5)} fill="#fbd53a" />
    <path d="M10 20h14M44 20h14" stroke="#888" strokeWidth={0.8} />
    <rect x="27" y="24" width="14" height="3" fill="#1b84ad" />
    <rect x="27" y="29" width="14" height="3" fill="#1b84ad" />
    <path d="M27 27H16v9M41 27h11v9" fill="none" stroke="#aaa" strokeWidth={0.5} />
    <path d={hexa(11, 40, 5.5)} fill="#86bf3c" />
    <path d={hexa(24, 40, 5.5)} fill="#86bf3c" />
    <path d={hexa(47, 40, 5.5)} fill="#666" />
    <path d={hexa(59, 40, 5.5)} fill="#666" />
  </svg>
);

const Thumb7 = () => (
  <svg viewBox="0 0 68 52" className="w-full h-full" preserveAspectRatio="none">
    <rect width="68" height="52" fill="#fff" />
    <TitleBar label="Click to edit title style" />
    <rect x="31" y="12" width="6" height="3" fill="#999" />
    {['#fbd53a', '#1b84ad', '#86bf3c', '#6b6b6b'].map((c, i) => (
      <g key={c}>
        <rect x={5 + i * 15} y="17" width="15" height="4.5" fill={c} />
        <rect x={5 + i * 15} y="25" width="13.5" height="21" rx="1.5" fill="#fff" stroke="#aaa" strokeWidth={0.7} />
        <path d={`M${7 + i * 15} 28h10M${7 + i * 15} 31h10M${7 + i * 15} 34h10M${7 + i * 15} 37h10M${7 + i * 15} 40h10M${7 + i * 15} 43h10`} stroke="#aaa" strokeWidth={0.8} />
      </g>
    ))}
    <rect y="50" width="68" height="1.5" fill="#c9e07a" />
  </svg>
);

const Thumb8 = () => (
  <svg viewBox="0 0 68 52" className="w-full h-full" preserveAspectRatio="none">
    <rect width="68" height="52" fill="#fff" />
    <TitleBar label="Click to edit title style" />
    <path d="M34 11l11 11-11 11-11-11z" fill="#fbd53a" />
    <path d="M21 21l11 12-11 12-11-12z" fill="#1b84ad" />
    <path d="M47 21l11 12-11 12-11-12z" fill="#86bf3c" />
    <path d="M6 15h12M6 18h10M50 15h12M50 18h10" stroke="#aaa" strokeWidth={0.8} />
    <rect y="49.5" width="68" height="2" fill="#c9e07a" />
  </svg>
);

const SLIDES: React.ReactNode[] = [
  <Thumb1 />, <Thumb2 />, <MapArt className="w-full h-full" />, <Thumb4 />, <Thumb5 />, <Thumb6 />, <Thumb7 />, <Thumb8 />,
];

const ThumbPane = () => (
  <div className="w-[107px] shrink-0 flex border-r border-[#d6d6d6] bg-[#f6f6f6] relative overflow-hidden">
    <div className="w-[95px] pt-[9px] flex flex-col gap-[10.3px]">
      {SLIDES.map((s, i) => (
        <div key={i} className="flex h-[52px] shrink-0">
          <div className={`w-[15px] pl-[7px] text-[10px] leading-[12px] font-['Liberation_Sans'] ${i === 2 ? 'text-[#d24726]' : 'text-[#555]'}`}>{i + 1}</div>
          <div
            className={
              i === 2
                ? 'w-[69px] h-[52px] border-2 border-[#d24726] overflow-hidden'
                : 'w-[69px] h-[52px] border border-[#d8d8d8] bg-white shadow-[0_0_1px_rgba(0,0,0,0.2)] overflow-hidden'
            }
          >
            {s}
          </div>
        </div>
      ))}
    </div>
    <div className="w-[9px] shrink-0 bg-[#ececec] flex flex-col h-full">
      <div className="h-[8px] bg-white border border-[#cfcfcf] flex items-center justify-center">
        <svg viewBox="0 0 6 4" className="w-[5px] h-[3px]"><path d="M3 0l3 4H0z" fill="#555" /></svg>
      </div>
      <div className="h-[103px] bg-white border-x border-b border-[#cfcfcf]" />
      <div className="flex-1" />
      <div className="h-[8px] bg-white border border-[#cfcfcf] flex items-center justify-center">
        <ChevronDown size={7} className="text-[#555]" strokeWidth={4} />
      </div>
    </div>
  </div>
);

const StatusBar = () => (
  <div className="h-[14px] shrink-0 bg-[#d24726] flex items-center text-white text-[7.5px] leading-none pl-[5px] whitespace-nowrap">
    <span className="w-[54px]">슬라이드 3/37</span>
    <StickyNote size={9} className="text-white" />
    <span className="ml-[11px]">한국어</span>
    <div className="flex-1" />
    <svg viewBox="0 0 10 10" className="w-[8px] h-[8px] mr-[2px]" fill="none" stroke="#fff"><path d="M5 1v3M1 5h8M2 7h6M2 9h6" /></svg>
    <span className="w-[56px]">슬라이드 노트</span>
    <MessageSquare size={8} className="text-white fill-white" />
    <span className="ml-[1px] w-[26px]">메모</span>
    <div className="w-[21px] h-full bg-[#b23a1d] flex items-center justify-center">
      <svg viewBox="0 0 10 10" className="w-[9px] h-[9px]"><path d="M1 1h8v8H1z" fill="#f3d7cf" /><rect x="3" y="3" width="3" height="3" fill="#b23a1d" /></svg>
    </div>
    <div className="w-[21px] flex justify-center">
      <svg viewBox="0 0 10 10" className="w-[9px] h-[9px]" fill="#fff"><rect width="4.3" height="4.3" /><rect x="5.7" width="4.3" height="4.3" /><rect y="5.7" width="4.3" height="4.3" /><rect x="5.7" y="5.7" width="4.3" height="4.3" /></svg>
    </div>
    <div className="w-[21px] flex justify-center">
      <svg viewBox="0 0 10 10" className="w-[9px] h-[9px]" fill="#f0c4b8"><path d="M1 1h3.5v8H1zM5.5 1H9v8H5.5z" /></svg>
    </div>
    <div className="w-[25px] flex justify-center">
      <svg viewBox="0 0 10 10" className="w-[9px] h-[9px]" fill="none" stroke="#f5dcd5"><path d="M1 1.5h8M2 1.5v4h6v-4M5 5.5V9M3 9h4" /></svg>
    </div>
    <span className="w-[6px] text-center font-bold">-</span>
    <div className="w-[58px] h-[1px] bg-[#f3c9bd] relative mx-[1px]">
      <div className="absolute left-[28px] -top-[3px] w-[2px] h-[7px] bg-white" />
    </div>
    <span className="w-[7px] text-center font-bold">+</span>
    <div className="w-[10px]" />
  </div>
);

export default function App() {
  return (
    <div
      className="relative w-[755px] h-[612px] overflow-hidden flex flex-col bg-white border-t border-l border-[#e58b72]"
      style={{ fontFamily: FONT }}
    >
      {/* title bar */}
      <div className="h-[16px] shrink-0 flex items-center text-[7.4px] text-[#555] relative">
        <div className="ml-[5px] w-[11px] h-[11px] bg-[#d24726] rounded-[1px] text-white text-[8px] font-bold leading-[11px] text-center font-['Liberation_Sans']">P</div>
        <div className="ml-[270px] whitespace-nowrap">[고급형]스마트폰과 비즈니스 아이콘(자동완성형포함).pptx - PowerPoint</div>
        <div className="flex-1" />
        <span className="text-[10px] font-bold mr-[10px] font-['Liberation_Sans']">?</span>
        <svg viewBox="0 0 10 10" className="w-[8px] h-[8px] mr-[6px]" fill="none" stroke="#666"><path d="M1 2h8v6H1zM3 4h4v2H3z" /></svg>
      </div>
      {/* tabs */}
      <div className="h-[15px] shrink-0 flex items-end text-[7.8px] text-[#444] leading-none border-b border-[#d6d6d6]">
        <div className="w-[34px] h-[14px] bg-[#d24726] text-white flex items-center justify-center">파일</div>
        <div className="ml-[2px] w-[23px] h-[15px] -mb-[1px] bg-white border-x border-t border-[#d6d6d6] text-[#d24726] flex items-center justify-center">홈</div>
        <div className="flex h-[14px] items-center">
          <span className="w-[30px] text-center">삽입</span>
          <span className="w-[38px] text-center">디자인</span>
          <span className="w-[30px] text-center">전환</span>
          <span className="w-[52px] text-center">애니메이션</span>
          <span className="w-[50px] text-center">슬라이드 쇼</span>
          <span className="w-[38px] text-center">검토</span>
          <span className="w-[18px] text-center">보기</span>
        </div>
        <div className="flex-1" />
        <span className="text-[8px] text-[#666] h-[14px] flex items-center font-['Liberation_Sans']">EON</span>
      </div>
      <Ribbon />
      <Qat />
      {/* main */}
      <div className="flex-1 min-h-0 flex">
        <ThumbPane />
        <div className="flex-1 flex flex-col min-w-0 bg-gradient-to-b from-white to-[#efefef]">
          <div className="flex-1 min-h-0 pl-[64px] pt-[23px]">
            <div className="w-[555px] h-[6px] flex">
              <div className="w-[520px] bg-[#e9e9e6]" />
              <div className="w-[35px] bg-[#d2d2d0]" />
            </div>
            <MapArt className="block w-[555px] h-[411px]" />
          </div>
          <div className="h-[27px] shrink-0 border-t border-[#d6d6d6] bg-[#f1f1f1] pl-[6px] pt-[1px] text-[9.5px] text-[#666] leading-[14px]">
            여기에 슬라이드 노트의 내용을 입력하십시오
          </div>
        </div>
      </div>
      <StatusBar />
      <ShapesMenu />
    </div>
  );
}
